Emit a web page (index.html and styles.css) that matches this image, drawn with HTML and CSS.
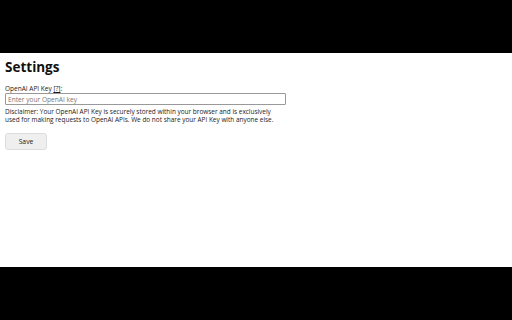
FILE: index.html
```html
<!DOCTYPE html>
<html>
<head>
<meta charset="utf-8">
<link rel="stylesheet" href="styles.css">
</head>
<body>
<div class="bar"></div>
<main class="page">
  <h1 class="title">Settings</h1>
  <label class="label" for="key">OpenAI API Key <a class="help" href="#">[?]</a>:</label>
  <input id="key" class="input" type="text" placeholder="Enter your OpenAI key">
  <p class="note">Disclaimer: Your OpenAI API Key is securely stored within your browser and is exclusively<br>used for making requests to OpenAI APIs. We do not share your API Key with anyone else.</p>
  <button class="save">Save</button>
</main>
<div class="bar"></div>
</body>
</html>
```
FILE: styles.css
```css
html, body {
  margin: 0;
  padding: 0;
  background: #000;
  height: 320px;
  overflow: hidden;
}
body {
  display: flex;
  flex-direction: column;
  font-family: "Open Sans", "DejaVu Sans", sans-serif;
  color: #1a1a1a;
}
.bar {
  height: 53px;
  flex: none;
}
.page {
  height: 214px;
  background: #fff;
  padding: 4px 5px 0;
  box-sizing: border-box;
  display: flex;
  flex-direction: column;
  align-items: flex-start;
}
.title {
  font-family: "Open Sans", sans-serif;
  font-size: 13.5px;
  font-weight: bold;
  margin: 0 0 7px;
  line-height: 20px;
  color: #111;
}
.label {
  font-size: 6.5px;
  line-height: 9px;
  color: #1a1a1a;
}
.help {
  color: #1a1a1a;
  text-decoration: underline;
}
.input {
  width: 281px;
  height: 12px;
  box-sizing: border-box;
  border: 1px solid #999;
  border-radius: 1px;
  margin: 0;
  padding: 0 2px;
  font-family: "Open Sans", "DejaVu Sans", sans-serif;
  font-size: 6.6px;
  color: #222;
  outline: none;
}
.input::placeholder {
  color: #777;
}
.note {
  font-size: 6.45px;
  line-height: 8px;
  margin: 3px 0 0;
  color: #1a1a1a;
}
.save {
  margin-top: 9px;
  width: 42px;
  height: 17px;
  border: 1px solid #ddd;
  border-radius: 3px;
  background: #efefef;
  font-family: "Open Sans", "DejaVu Sans", sans-serif;
  font-size: 6.8px;
  color: #1a1a1a;
  padding: 0;
}
```
